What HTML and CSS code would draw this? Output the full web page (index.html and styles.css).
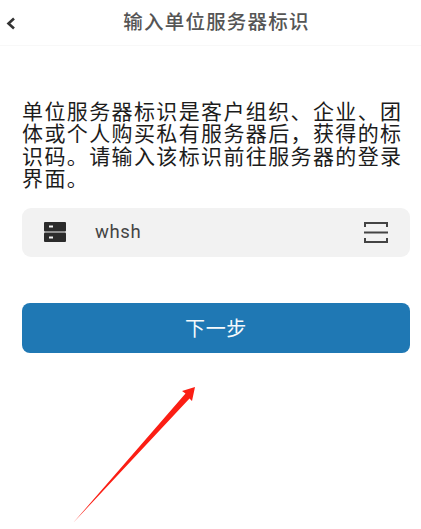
FILE: index.html
```html
<!DOCTYPE html>
<html lang="zh-CN">
<head>
<meta charset="utf-8">
<title>输入单位服务器标识</title>
<link rel="stylesheet" href="styles.css">
</head>
<body>
<header class="top-bar">
  <svg class="back-icon" width="10" height="13" viewBox="0 0 10 13"><path d="M8 1.5 L2.5 6.5 L8 11.5" fill="none" stroke="#333" stroke-width="2.6"/></svg>
  <h1 class="title">输入单位服务器标识</h1>
</header>
<main class="content">
  <p class="intro">单位服务器标识是客户组织、企业、团体或个人购买私有服务器后，获得的标识码。请输入该标识前往服务器的登录界面。</p>
  <div class="field">
    <svg class="server-icon" width="23" height="20" viewBox="0 0 23 20"><rect x="0" y="0" width="22" height="9.4" rx="1" fill="#2b2b2b"/><rect x="0" y="10.6" width="22" height="9.4" rx="1" fill="#2b2b2b"/><rect x="5" y="3.5" width="4" height="2" fill="#f2f2f2"/><rect x="5" y="14.5" width="4" height="2" fill="#f2f2f2"/></svg>
    <span class="field-value">whsh</span>
    <svg class="scan-icon" width="24" height="21" viewBox="0 0 24 21"><path d="M1 5 V1 H23 V5 M1 16 V20 H23 V16" fill="none" stroke="#444" stroke-width="2"/><rect x="0" y="9.5" width="24" height="2" fill="#444"/></svg>
  </div>
  <button class="next" type="button">下一步</button>
</main>
<svg class="arrow" width="421" height="529" viewBox="0 0 421 529"><polygon points="73,523 185.5,393.5 182,391 195,387 192,401 189.5,398.5" fill="#fb1e14"/></svg>
</body>
</html>
```
FILE: styles.css
```css
html, body { margin: 0; padding: 0; background: #fff; }
body {
  position: relative;
  width: 421px;
  height: 529px;
  overflow: hidden;
  font-family: "Noto Sans CJK SC", "Noto Sans", sans-serif;
}
.top-bar {
  height: 46px;
  box-sizing: border-box;
  border-bottom: 1px solid #f8f8f8;
  display: flex;
  align-items: center;
  justify-content: center;
  position: relative;
  padding: 0 0 3px 12px;
}
.back-icon { position: absolute; left: 6px; top: 17px; }
.title {
  margin: 0;
  font-size: 19.5px;
  letter-spacing: 1.2px;
  font-weight: 500;
  line-height: 40px;
  color: #555;
}
.content { padding: 53px 11px 0 22px; }
.intro {
  margin: 0;
  font-size: 21px;
  letter-spacing: 1.38px;
  line-height: 22.4px;
  color: #1c1c1c;
}
.field {
  margin-top: 19px;
  height: 49px;
  background: #f2f2f2;
  border-radius: 9px;
  display: flex;
  align-items: center;
  padding: 0 22px;
}
.server-icon { flex: none; }
.field-value {
  margin-left: 28px;
  flex: 1;
  font-family: Roboto, sans-serif;
  font-size: 18.5px;
  letter-spacing: 0.6px;
  color: #444;
}
.scan-icon { flex: none; }
.next {
  display: block;
  width: 100%;
  margin-top: 46px;
  height: 50px;
  border: 0;
  border-radius: 8px;
  background: #1f78b4;
  color: #f6fafc;
  font-family: inherit;
  font-size: 20px;
  letter-spacing: 0.7px;
  font-weight: 400;
}
.arrow { position: absolute; left: 0; top: 0; pointer-events: none; }
```
